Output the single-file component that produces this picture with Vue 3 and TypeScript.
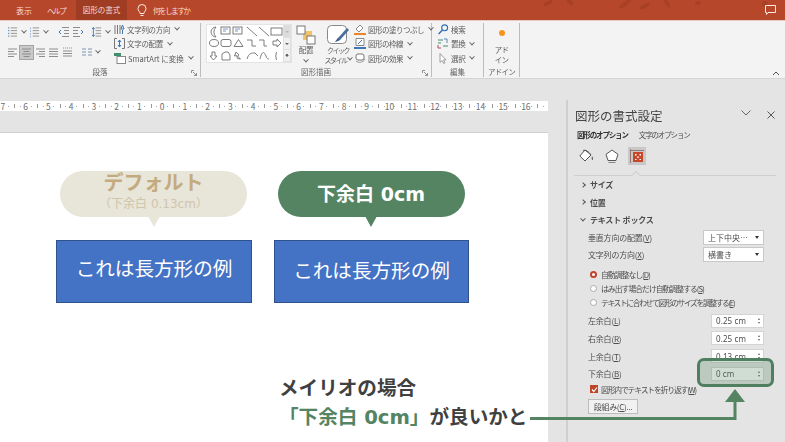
<script setup lang="ts">
const rulerNums: number[] = [7, 6, 5, 4, 3, 2, 1, 0, 1, 2, 3, 4, 5, 6, 7, 8, 9, 10, 11, 12, 13, 14, 15, 16, 0];
const row1 = [
  { d: 'M3 1.5h7M3 4.5h7M3 7.5h7M3 10.5h7', w: 10, acc: 'M0 1.5h1.5M0 4.5h1.5M0 7.5h1.5M0 10.5h1.5', chev: true, ml: 8 },
  { d: 'M3 1.5h7M3 4.5h7M3 7.5h7M3 10.5h7', w: 10, acc: 'M0 1v2M0 4v2M0 7v2M0 10v2', chev: true, ml: 4 },
  { d: 'M4 1.5h7M6 4.5h5M6 7.5h5M4 10.5h7', w: 11, acc: 'M3 4 1 6l2 2', chev: false, ml: 10 },
  { d: 'M0 1.5h7M0 4.5h5M0 7.5h5M0 10.5h7', w: 11, acc: 'M8 4l2 2-2 2', chev: false, ml: 4 },
  { d: 'M4 1.5h6M4 4.5h6M4 7.5h6M4 10.5h6', w: 10, acc: 'M1.500 1v10M0 3l1.500-2 1.500 2M0 9l1.500 2 1.500-2', chev: true, ml: 8 },
];
const row2 = [
  { d: 'M0 2h9M0 4.500h6M0 7h9M0 9.500h6', on: false, ml: 8 },
  { d: 'M0 2h9M1.500 4.500h6M0 7h9M1.500 9.500h6', on: true, ml: 3 },
  { d: 'M0 2h9M3 4.500h6M0 7h9M3 9.500h6', on: false, ml: 3 },
  { d: 'M0 2h9M0 4.500h9M0 7h9M0 9.500h9', on: false, ml: 4 },
  { d: 'M0 1h1M2 1h1M4 1h1M6 1h1M8 1h1M0 4h9M0 6.500h9M0 9h9', on: false, ml: 5 },
];
const radios = [
  { t: '自動調整なし', k: 'D', on: true, tight: false },
  { t: 'はみ出す場合だけ自動調整する', k: 'S', on: false, tight: false },
  { t: 'テキストに合わせて図形のサイズを調整する', k: 'E', on: false, tight: true },
];
const margins = [
  { t: '左余白', k: 'L', v: '0.25 cm' },
  { t: '右余白', k: 'R', v: '0.25 cm' },
  { t: '上余白', k: 'T', v: '0.13 cm' },
  { t: '下余白', k: 'B', v: '0 cm' },
];
</script>

<template>
  <div class="page">
    <header class="titlebar">
      <nav class="tabs">
        <span class="tab t1">表示</span>
        <span class="tab t2">ヘルプ</span>
        <span class="tab active">図形の書式</span>
        <svg class="bulb" width="10" height="13" viewBox="0 0 10 13"><path d="M3 9.500C3 7.500 1 7 1 4.500a4 4 0 0 1 8 0C9 7 7 7.500 7 9.500zM3.500 11.500h3" fill="none" stroke="#fbe9e2" stroke-width="1"/></svg>
        <span class="tab tell">何をしますか</span>
      </nav>
      <svg class="leaves" width="240" height="14" viewBox="0 0 240 14">
        <g fill="#9c3c22" opacity=".55">
          <ellipse cx="8" cy="3" rx="5" ry="2" transform="rotate(-30 8 3)"/>
          <ellipse cx="30" cy="2" rx="4" ry="2" transform="rotate(40 30 2)"/>
          <ellipse cx="85" cy="4" rx="7" ry="2" transform="rotate(-35 85 4)"/>
          <ellipse cx="105" cy="6" rx="6" ry="2" transform="rotate(-30 105 6)"/>
          <ellipse cx="127" cy="3" rx="5" ry="2" transform="rotate(60 127 3)"/>
          <ellipse cx="158" cy="3" rx="3" ry="2"/>
          <ellipse cx="225" cy="4" rx="3" ry="3"/>
        </g>
      </svg>
      <svg class="comment" width="12" height="11" viewBox="0 0 12 11"><path d="M.5.500h10v7H3L1.500 9.500v-2h-1z" fill="none" stroke="#fbe9e2"/></svg>
    </header>

    <section class="ribbon">
      <div class="group g-para">
        <div class="group-body">
          <div class="para-left">
            <div class="icon-row">
              <span v-for="(i, n) in row1" :key="n" class="pi" :style="{ marginLeft: i.ml + 'px' }">
                <svg :width="i.w" height="12" viewBox="0 0 11 12"><path :d="i.d" stroke="#8d8d8d" fill="none"/><path :d="i.acc" stroke="#3f77b5" fill="none"/></svg>
                <i v-if="i.chev" class="chev"></i>
              </span>
            </div>
            <div class="icon-row second">
              <span v-for="(i, n) in row2" :key="n" class="pi" :class="{ on: i.on }" :style="{ marginLeft: i.ml + 'px' }">
                <svg width="9" height="11" viewBox="0 0 9 11"><path :d="i.d" stroke="#8d8d8d" fill="none"/></svg>
              </span>
              <span class="pi cols">
                <svg width="10" height="11" viewBox="0 0 10 11"><path d="M0 2h4M6 2h4M0 5h4M6 5h4M0 8h4M6 8h4" stroke="#7c93b3" fill="none"/></svg>
                <i class="chev"></i>
              </span>
            </div>
          </div>
          <div class="cmds para-cmds">
            <div class="cmd">
              <svg width="11" height="11" viewBox="0 0 11 11"><path d="M1 1v9M3.500 1v9M6 1v9" stroke="#777" fill="none"/><path d="M8.500 1l-1.500 4h3zM8.500 6v4" stroke="#3f77b5" fill="none"/></svg>
              <span>文字列の方向</span><i class="chev"></i>
            </div>
            <div class="cmd">
              <svg width="11" height="11" viewBox="0 0 11 11"><path d="M3 .500H.500v10H3M8 .500h2.500v10H8" stroke="#777" fill="none"/><path d="M5.500 2v7M4 4l1.500-2L7 4M4 7l1.500 2L7 7" stroke="#3f77b5" fill="none"/></svg>
              <span>文字の配置</span><i class="chev"></i>
            </div>
            <div class="cmd">
              <svg width="12" height="11" viewBox="0 0 12 11"><rect x="3" y="3.500" width="8.500" height="7" fill="#fff" stroke="#888"/><rect x="0" y="0" width="7" height="3" fill="#3f8f6f"/></svg>
              <span class="wide">SmartArt に変換</span><i class="chev"></i>
            </div>
          </div>
        </div>
        <div class="group-label">段落<svg class="launch" width="6" height="6" viewBox="0 0 6 6"><path d="M.500 3V.500H3M2 2l3.500 3.500M3 5.500h2.500V3" fill="none" stroke="#777" stroke-width=".8"/></svg></div>
      </div>

      <div class="group g-draw">
        <div class="group-body draw">
          <div class="gallery">
            <svg class="shapes" width="76" height="37" viewBox="0 0 76 37">
              <g fill="none" stroke="#6f6f6f" stroke-width=".9">
                <path d="M9 2a5 5 0 0 0 0 10 7 7 0 0 1 0-10z"/>
                <rect x="14" y="2" width="9" height="7"/><path d="M16 4h5M16 6h3" stroke="#6a8fc0"/>
                <rect x="26" y="2" width="9" height="7"/><path d="M28 4h5M28 6h3" stroke="#6a8fc0"/>
                <path d="M40 2l10 9M52 2l10 9"/>
                <rect x="64" y="3" width="11" height="7"/>
                <ellipse cx="7" cy="18" rx="4.500" ry="3.500"/>
                <rect x="14" y="14.500" width="10" height="7" rx="2"/>
                <path d="M27 21.500l4.500-7 4.500 7zM40 15h5v6h4M52 15h5v6h3M66 16h4v-2l4 4-4 4v-2h-4z"/>
                <path d="M5 27h3v4h2l-3.500 4L3 31h2zM15 35v-6l3-2h3l2 3v5zM29 27l3 3-1.500 1 3 3-3-.5-1-3-2 .5zM40 34c2-6 4-6 8-6l3 3M53 34c2-8 4-8 6-3 1 3 2 3 3 3M70 27c-2 1 0 3-1.500 4 1.500 1-.5 3 1.500 4"/>
              </g>
            </svg>
            <div class="scroll">
              <span class="sb dis"><i></i></span>
              <span class="sb"><i class="down"></i></span>
              <span class="sb"><i class="down bar"></i></span>
            </div>
          </div>
          <div class="big b-arr">
            <svg width="20" height="20" viewBox="0 0 20 20"><rect x="7" y="6" width="9" height="9" fill="#f0c36a"/><rect x="1" y="1" width="8" height="8" fill="#fff" stroke="#777"/><rect x="11" y="11" width="8" height="8" fill="#fff" stroke="#777"/></svg>
            <span class="bt">配置</span><i class="chev"></i>
          </div>
          <div class="big b-qs">
            <svg width="22" height="20" viewBox="0 0 22 20"><rect x=".500" y=".500" width="19" height="18" rx="4" fill="#fff" stroke="#888"/><path d="M20 3 11 13l-3 4 5-2 9-10z" fill="#4b6f9f"/><path d="M8 17l3-4 2 2z" fill="#3f5f8f"/></svg>
            <span class="bt">クイック<br>スタイル <i class="chev inl"></i></span>
          </div>
          <div class="cmds draw-cmds">
            <div class="cmd">
              <svg width="12" height="11" viewBox="0 0 12 11"><path d="M6 1 2 5l3 3 4-4z" fill="#fff" stroke="#888"/><path d="M0 9h12v2H0z" fill="#e8862a"/></svg>
              <span>図形の塗りつぶし</span><i class="chev"></i>
            </div>
            <div class="cmd">
              <svg width="12" height="11" viewBox="0 0 12 11"><path d="M2 .500h8v7H2z" fill="#fff" stroke="#888"/><path d="M4 6l4-4" stroke="#3f77b5"/><path d="M0 9h12v2H0z" fill="#3f77b5"/></svg>
              <span>図形の枠線</span><i class="chev"></i>
            </div>
            <div class="cmd">
              <svg width="12" height="11" viewBox="0 0 12 11"><rect x="2" y="1" width="8" height="6" rx="2" fill="#fff" stroke="#777"/><path d="M2 8c2 2 7 2 9-2" stroke="#999" fill="none"/></svg>
              <span>図形の効果</span><i class="chev"></i>
            </div>
          </div>
        </div>
        <div class="group-label">図形描画<svg class="launch" width="6" height="6" viewBox="0 0 6 6"><path d="M.500 3V.500H3M2 2l3.500 3.500M3 5.500h2.500V3" fill="none" stroke="#777" stroke-width=".8"/></svg></div>
      </div>

      <div class="group g-edit">
        <div class="group-body">
          <div class="cmds edit-cmds">
            <div class="cmd">
              <svg width="12" height="11" viewBox="0 0 10 10"><circle cx="6.500" cy="3.500" r="2.700" fill="none" stroke="#2f6db5"/><path d="M4.500 5.500 1 9" stroke="#2f6db5" stroke-width="1.300"/></svg>
              <span>検索</span>
            </div>
            <div class="cmd">
              <svg width="12" height="11" viewBox="0 0 12 11"><path d="M1 2h5M1 5h3M6 8h5" stroke="#3f8f6f"/><path d="M7 1h3v4" stroke="#5f87b8" fill="none"/><path d="M1 7v3h3" stroke="#b04a6a" fill="none"/></svg>
              <span>置換</span><i class="chev"></i>
            </div>
            <div class="cmd">
              <svg width="12" height="11" viewBox="0 0 10 11"><path d="M2 .500v9l2.200-2 1.500 3 1.300-.6-1.500-3H8z" fill="#fff" stroke="#888" stroke-width=".8"/></svg>
              <span>選択</span><i class="chev"></i>
            </div>
          </div>
        </div>
        <div class="group-label">編集</div>
      </div>

      <div class="group g-addin">
        <div class="group-body addin">
          <i class="dot"></i>
          <span class="bt">アド<br>イン</span>
        </div>
        <div class="group-label">アドイン</div>
      </div>
      <svg class="collapse" width="8" height="5" viewBox="0 0 8 5"><path d="M1 4l3-3 3 3" fill="none" stroke="#555"/></svg>
    </section>

    <main class="workspace">
      <div class="doc">
        <div class="ruler">
          <div class="ruler-track">
            <span v-for="(n, i) in rulerNums" :key="i" class="tick">{{ i === rulerNums.length - 1 ? '' : n }}</span>
          </div>
        </div>
        <div class="slide">
          <div class="examples">
            <div class="example">
              <div class="bubble pale">
                <strong>デフォルト</strong>
                <small>（下余白 0.13cm）</small>
              </div>
              <div class="rect up">これは長方形の例</div>
            </div>
            <div class="example second-ex">
              <div class="bubble green">
                <strong>下余白 0cm</strong>
              </div>
              <div class="rect">これは長方形の例</div>
            </div>
          </div>
          <div class="caption">
            <p>メイリオの場合</p>
            <p class="c2"><em>「下余白 0cm」</em>が良いかと</p>
          </div>
        </div>
      </div>

      <aside class="pane">
        <div class="pane-head">
          <h2>図形の書式設定</h2>
          <svg class="p-chev" width="10" height="6" viewBox="0 0 10 6"><path d="M.500.500 5 5 9.500.500" fill="none" stroke="#666"/></svg>
          <svg class="p-x" width="8" height="8" viewBox="0 0 8 8"><path d="M.500.500l7 7M7.500.500l-7 7" stroke="#555"/></svg>
        </div>
        <div class="pane-tabs"><b>図形のオプション</b><span>文字のオプション</span></div>
        <div class="pane-icons">
          <svg width="15" height="15" viewBox="0 0 15 15"><path d="M6 1 .800 7 6 12l6-6z" fill="#fff" stroke="#555"/><path d="M4 1.500c2-1 6 1 8 4.500" fill="none" stroke="#555"/><path d="M13 7c1 2 1.500 3 .5 4-1 0-1-2-.5-4z" fill="#555"/></svg>
          <svg class="pent" width="14" height="15" viewBox="0 0 14 15"><path d="M7 1l6 4.300-2 6.200H3L1 5.300z" fill="#fff" stroke="#555"/><path d="M3.500 13.500h7" stroke="#888"/></svg>
          <span class="active-ic">
            <svg width="14" height="14" viewBox="0 0 14 14"><path d="M.500 0v14M0 1.500h14" stroke="#9a7a70"/><rect x="3" y="3" width="10" height="10" fill="#c8472a"/><path d="M5 5h1.500v1.500H5zM9.500 5H11v1.500H9.500zM7.200 7.500h1.500V9H7.200zM5 10h1.500v1H5zM9.500 10H11v1H9.500z" fill="#fff"/></svg>
          </span>
        </div>
        <div class="pane-sep"></div>
        <div class="sec"><i class="ar r"></i>サイズ</div>
        <div class="sec"><i class="ar r"></i>位置</div>
        <div class="sec"><i class="ar d"></i>テキスト ボックス</div>
        <div class="field sel-row">
          <label>垂直方向の配置(<u>V</u>)</label>
          <div class="select"><span>上下中央…</span><i class="tri"></i></div>
        </div>
        <div class="field sel-row">
          <label>文字列の方向(<u>X</u>)</label>
          <div class="select"><span>横書き</span><i class="tri"></i></div>
        </div>
        <div class="radios">
          <div v-for="r in radios" :key="r.k" class="radio" :class="{ tight: r.tight }">
            <i class="rd" :class="{ on: r.on }"></i>
            <span>{{ r.t }}(<u>{{ r.k }}</u>)</span>
          </div>
        </div>
        <div v-for="m in margins" :key="m.k" class="field num-row">
          <label>{{ m.t }}(<u>{{ m.k }}</u>)</label>
          <div class="num"><span>{{ m.v }}</span><i class="spin"><b></b><b class="dn"></b></i></div>
        </div>
        <div class="check">
          <i class="cb"><svg width="7" height="7" viewBox="0 0 7 7"><path d="M1 3.500l1.800 2L6 1.500" fill="none" stroke="#fff" stroke-width="1.200"/></svg></i>
          <span>図形内でテキストを折り返す(<u>W</u>)</span>
        </div>
        <div class="columns-btn">段組み(<u>C</u>)...</div>
      </aside>
    </main>

    <div class="highlight"></div>
    <svg class="arrow" width="222" height="34" viewBox="0 0 222 34">
      <path d="M0 30.500h205V12" fill="none" stroke="#548462" stroke-width="3"/>
      <path d="M195 14 205 1l10 13z" fill="#548462"/>
    </svg>
  </div>
</template>

<style>
html, body { margin: 0; background: #fff; }
</style>

<style scoped>
.page {
  position: relative;
  width: 785px;
  height: 442px;
  overflow: hidden;
  background: #e4e4e4;
  font-family: "Noto Sans CJK JP", "Noto Sans", sans-serif;
  color: #555;
  display: flex;
  flex-direction: column;
}
p, h2 { margin: 0; }
i, em { font-style: normal; }

/* title bar */
.titlebar {
  position: relative;
  height: 20px;
  flex: none;
  background: #b7472a;
  border-bottom: 1px solid #e8c9bf;
  box-sizing: content-box;
}
.tabs { display: flex; align-items: center; height: 20px; }
.tab { font-size: 8px; color: #f6dcd2; white-space: nowrap; flex: none; }
.t1 { margin-left: 16px; }
.t2 { margin-left: 15px; width: 18px; font-size: 7.500px; letter-spacing: -1.400px; }
.tab.active {
  margin-left: 11px;
  width: 51px;
  height: 20px;
  line-height: 20px;
  text-align: center;
  background: #9f3d24;
  font-size: 7.500px;
}
.bulb { margin-left: 10px; flex: none; }
.tell { margin-left: 6px; font-size: 7.500px; letter-spacing: -1.400px; }
.leaves { position: absolute; left: 540px; top: 0; }
.comment { position: absolute; left: 765px; top: 5px; }

/* ribbon */
.ribbon {
  position: relative;
  flex: none;
  height: 57px;
  background: #f3f3f3;
  border-bottom: 1px solid #d4d4d4;
  display: flex;
  filter: blur(.3px);
}
.group {
  flex: none;
  box-sizing: border-box;
  border-right: 1px solid #bcbcbc;
  margin: 2px 0 1px;
  display: flex;
  flex-direction: column;
  position: relative;
}
.g-para { width: 201px; }
.g-draw { width: 231px; }
.g-edit { width: 52px; }
.g-addin { width: 36px; }
.group-body { flex: 1; display: flex; min-height: 0; }
.group-label {
  height: 11px;
  line-height: 11px;
  font-size: 7.500px;
  text-align: center;
  color: #666;
}
.launch { position: absolute; right: 3px; bottom: 1px; }
.para-left { width: 114px; flex: none; }
.icon-row { display: flex; align-items: center; height: 14px; margin-top: 2px; }
.icon-row.second { margin-top: 6px; }
.pi { display: inline-flex; align-items: center; gap: 4px; flex: none; }
.pi.on { background: #c9c9c9; outline: 1px solid #a4a4a4; padding: 1px 2px; }
.pi.cols { margin-left: 10px; }
.chev {
  display: inline-block;
  width: 3px;
  height: 3px;
  border-right: 1px solid #666;
  border-bottom: 1px solid #666;
  transform: rotate(45deg) translate(-1px, -1px);
  flex: none;
}
.chev.inl { margin-left: 1px; vertical-align: 2px; }
.cmds { display: flex; flex-direction: column; gap: 2.500px; }
.cmd {
  display: flex;
  align-items: center;
  height: 12px;
  gap: 2px;
  font-size: 7.500px;
  white-space: nowrap;
  color: #5c5c5c;
}
.cmd span { letter-spacing: -.3px; margin-right: 3px; }
.cmd span.wide { letter-spacing: 0; }
.draw { padding-top: 2px; padding-left: 6px; }
.gallery {
  display: flex;
  flex: none;
  width: 84px;
  height: 37px;
  background: #fff;
  outline: 1px solid #e4e4e4;
}
.shapes { flex: none; }
.scroll { display: flex; flex-direction: column; flex: 1; }
.sb {
  flex: 1;
  background: #f0f0f0;
  border: 1px solid #e0e0e0;
  display: flex;
  align-items: center;
  justify-content: center;
  margin-top: -1px;
}
.sb.dis { background: #dcdcdc; margin-top: 0; }
.sb i { width: 0; height: 0; border: 2px solid transparent; border-top-color: #666; margin-top: 2px; }
.sb.dis i { border-top-color: #bbb; }
.sb .bar { box-shadow: 0 -2px 0 -1px #666; }
.big {
  flex: none;
  display: flex;
  flex-direction: column;
  align-items: center;
  font-size: 7.500px;
  color: #5c5c5c;
}
.bt { line-height: 10px; text-align: center; letter-spacing: -.3px; font-size: 7.500px; color: #5c5c5c; }
.b-arr { width: 24px; margin-left: 3px; }
.b-arr .chev { margin-top: 4px; }
.b-qs { width: 32px; margin-left: 4px; }
.b-qs .bt { font-size: 7px; letter-spacing: -1.500px; white-space: nowrap; }
.draw-cmds { margin: -2px 0 0 0; }
.draw-cmds .cmd span { letter-spacing: -.5px; }
.edit-cmds { padding-left: 5px; }
.addin { flex-direction: column; align-items: center; padding-top: 7px; }
.dot { width: 6px; height: 6px; border-radius: 50%; background: #f7941d; margin-bottom: 9px; flex: none; }
.addin .bt { letter-spacing: -.8px; }
.g-addin .group-label { letter-spacing: -.8px; }
.collapse { position: absolute; left: 772px; bottom: 2px; }

/* document */
.workspace { flex: 1; display: flex; min-height: 0; }
.doc {
  flex: none;
  width: 566px;
  display: flex;
  flex-direction: column;
  padding-top: 22px;
  box-sizing: border-box;
}
.ruler { width: 548px; height: 10px; background: #fff; overflow: hidden; flex: none; }
.ruler-track { display: flex; margin-left: -8.400px; }
.tick {
  flex: none;
  width: 22.740px;
  height: 10px;
  line-height: 10px;
  text-align: center;
  font-size: 8.500px;
  color: #6e6e6e;
  background:
    linear-gradient(#999, #999) 0 3px / 1px 4px no-repeat,
    linear-gradient(#aaa, #aaa) 25% 5px / 1px 1px no-repeat,
    linear-gradient(#aaa, #aaa) 75% 5px / 1px 1px no-repeat;
}
.slide {
  margin-top: 21px;
  width: 548px;
  flex: 1;
  background: #fff;
  border-top: 1px solid #cfcfcf;
  padding: 38px 0 0 56px;
  box-sizing: border-box;
  font-family: "DejaVu Sans", "Noto Sans CJK JP", sans-serif;
}
.examples { display: flex; gap: 22px; }
.example { width: 196px; display: flex; flex-direction: column; align-items: center; }
.second-ex { width: 195px; }
.bubble {
  position: relative;
  width: 187px;
  height: 46px;
  margin-right: 1px;
  border-radius: 23px;
  display: flex;
  flex-direction: column;
  align-items: center;
  justify-content: flex-start;
  box-sizing: border-box;
}
.bubble::after {
  content: "";
  position: absolute;
  left: 50%;
  top: 45px;
  margin-left: -6px;
  border: 6px solid transparent;
  border-bottom: 0;
  border-top-width: 11px;
}
.bubble.pale { background: #e8e5d9; padding-top: 1px; }
.bubble.pale::after { border-top-color: #e8e5d9; }
.bubble.pale strong { font-size: 20px; line-height: 22px; color: #c4ab7f; font-weight: 700; }
.bubble.pale small { font-size: 12px; line-height: 15px; margin-top: 2.500px; color: #cfc4ac; white-space: nowrap; }
.bubble.green { background: #548462; justify-content: center; }
.bubble.green::after { border-top-color: #548462; }
.bubble.green strong { font-size: 19px; color: #fff; font-weight: 700; margin-top: -4px; }
.rect {
  width: 100%;
  height: 63px;
  margin-top: 23px;
  box-sizing: border-box;
  background: #4472c4;
  border: 1px solid #2f528f;
  color: #fff;
  font-size: 19.600px;
  line-height: 61px;
  text-align: center;
  white-space: nowrap;
}
.rect.up { line-height: 57px; }
.caption {
  margin: 71px 0 0 223px;
  color: #404040;
  font-size: 19.600px;
  font-weight: 700;
  line-height: 29px;
  white-space: nowrap;
}
.caption em { color: #548462; }

/* pane */
.pane {
  flex: 1;
  margin-top: 21px;
  border-left: 2px solid #cfcfcf;
  box-sizing: border-box;
  padding: 0 21px 0 0;
  color: #4d4d4d;
  filter: blur(.25px);
}
.pane-head { position: relative; height: 30px; padding-left: 7px; display: flex; align-items: center; }
.pane-head h2 { font-size: 12.500px; font-weight: 400; color: #444; }
.p-chev { position: absolute; left: 173px; top: 10px; }
.p-x { position: absolute; left: 199px; top: 11px; }
.pane-tabs { height: 10px; line-height: 10px; padding-left: 9px; font-size: 7.500px; display: flex; gap: 11px; letter-spacing: -1.150px; white-space: nowrap; }
.pane-tabs b { color: #333; }
.pane-icons { display: flex; align-items: center; padding: 7px 0 0 11px; height: 18px; }
.pent { margin-left: 11px; }
.active-ic {
  margin-left: 9px;
  width: 18px;
  height: 18px;
  background: #c8c8c8;
  display: flex;
  align-items: center;
  justify-content: center;
}
.pane-sep { position: relative; margin: 10px -12px 0 6px; height: 1px; background: #cfcfcf; }
.pane-sep::after {
  content: "";
  position: absolute;
  left: 59px;
  top: -3px;
  width: 5px;
  height: 5px;
  background: #e4e4e4;
  border-left: 1px solid #cfcfcf;
  border-top: 1px solid #cfcfcf;
  transform: rotate(45deg);
}
.sec {
  height: 17.500px;
  line-height: 17.500px;
  font-size: 8px;
  font-weight: 700;
  display: flex;
  align-items: center;
  padding-left: 13px;
  letter-spacing: -.2px;
}
.ar { width: 3px; height: 3px; border-right: 1px solid #555; border-bottom: 1px solid #555; margin-right: 5px; flex: none; }
.ar.r { transform: rotate(-45deg); }
.ar.d { transform: rotate(45deg) translate(-1px, -1px); }
.field { display: flex; align-items: center; justify-content: space-between; padding-left: 20px; font-size: 8px; white-space: nowrap; }
.field label { letter-spacing: -.2px; }
.sel-row { height: 17.500px; }
.select {
  width: 61px;
  height: 15px;
  box-sizing: border-box;
  background: #fff;
  border: 1px solid #c8c8c8;
  padding: 0 4px;
  display: flex;
  align-items: center;
  justify-content: space-between;
}
.tri { width: 0; height: 0; border: 2.500px solid transparent; border-top: 3px solid #333; border-bottom: 0; }
.radios { padding: 4px 0 2px; }
.radio { height: 14.200px; display: flex; align-items: center; padding-left: 22px; font-size: 7.800px; letter-spacing: -.950px; white-space: nowrap; }
.radio.tight { letter-spacing: -1.400px; }
.rd {
  width: 7px;
  height: 7px;
  box-sizing: border-box;
  border-radius: 50%;
  background: #fff;
  border: 1px solid #aaa;
  margin-right: 4px;
  flex: none;
}
.rd.on { background: #fff; border: 2px solid #c0442a; }
.num-row { height: 17.600px; }
.num {
  width: 53px;
  height: 14px;
  box-sizing: border-box;
  background: #fff;
  border: 1px solid #d4d4d4;
  padding: 0 3px 0 4px;
  display: flex;
  align-items: center;
  justify-content: space-between;
  font-size: 8px;
  letter-spacing: .1px;
  font-family: "Noto Sans", sans-serif;
}
.spin { display: flex; flex-direction: column; gap: 2px; }
.spin b { width: 0; height: 0; border: 1.500px solid transparent; border-bottom: 2px solid #666; border-top: 0; display: block; }
.spin b.dn { border-bottom: 0; border-top: 2px solid #666; }
.check { display: flex; align-items: center; height: 14px; padding-left: 22px; font-size: 7.800px; letter-spacing: -1.150px; white-space: nowrap; }
.cb {
  width: 8px;
  height: 8px;
  background: #c0442a;
  margin-right: 3px;
  display: flex;
  align-items: center;
  justify-content: center;
  flex: none;
}
.columns-btn {
  margin: 3px 0 0 20px;
  width: 50px;
  height: 15px;
  line-height: 13px;
  box-sizing: border-box;
  border: 1px solid #bcbcbc;
  background: #f1f1f1;
  font-size: 8px;
  text-align: center;
  letter-spacing: -.3px;
}

/* annotation overlays */
.highlight {
  position: absolute;
  left: 697px;
  top: 358px;
  width: 77px;
  height: 29px;
  box-sizing: border-box;
  border: 3.500px solid #4f7f5f;
  border-radius: 7px;
  background: rgba(84, 132, 98, .28);
}
.arrow { position: absolute; left: 530px; top: 388px; }
</style>
